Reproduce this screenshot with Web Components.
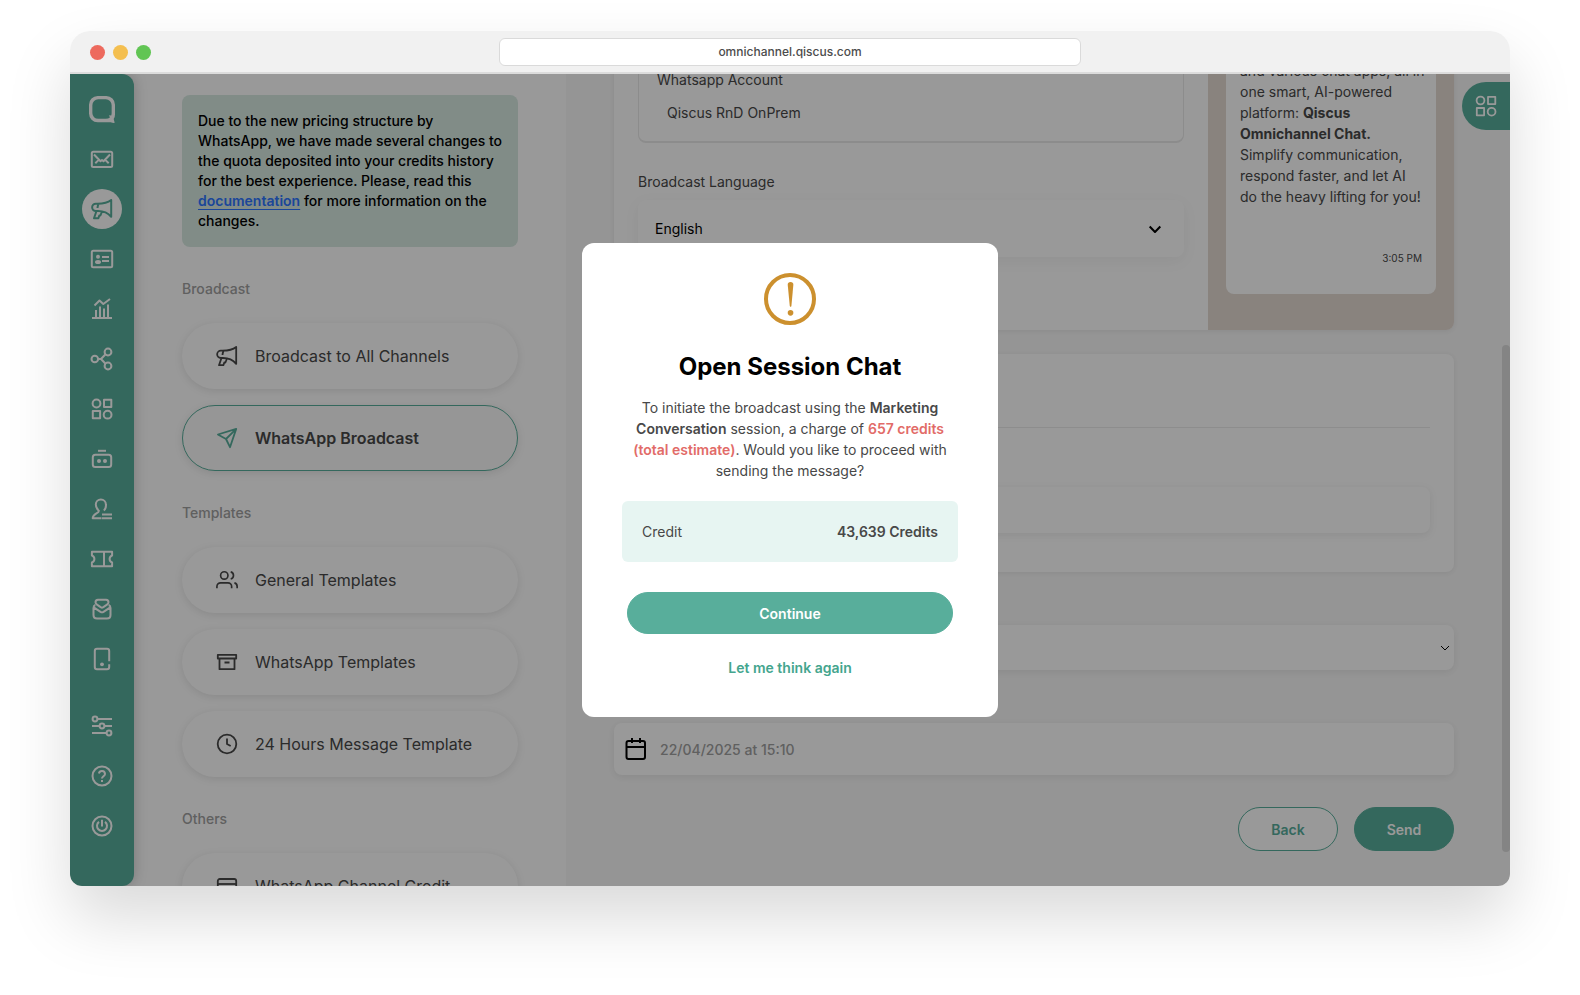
<!DOCTYPE html>
<html lang="en">
<head>
<meta charset="utf-8">
<title>Qiscus Omnichannel</title>
<style>
  :root {
    --brand: #58ae9b;
    --brand-dark: #44a58e;
    --text: #484848;
    --muted: #a0a0a0;
  }
  html, body { margin: 0; }
  body {
    box-sizing: border-box;
    min-height: 100vh;
    padding: 31px 70px 109px;
    background: #fff;
    color: var(--text);
    font: 400 14px/21px Inter, "Liberation Sans", sans-serif;
    overflow: hidden;
  }
</style>
</head>
<body>
<browser-window address="omnichannel.qiscus.com">
  <omni-app></omni-app>
</browser-window>

<script>
const ICONS = {
  logo: '<path fill="currentColor" stroke="none" fill-rule="evenodd" d="M8 0H16A8 8 0 0 1 24 8V17Q24 19.500 22.800 21.200L23.700 24.800Q22 25 20 24.200H8A8 8 0 0 1 0 16.200V8A8 8 0 0 1 8 0ZM8.500 3.100A5.400 5.400 0 0 0 3.100 8.500V15.700A5.400 5.400 0 0 0 8.500 21.100H15.500Q17.800 21.100 19.300 19.900L18.500 17.800L20.500 18.100Q20.900 17 20.900 15.700V8.500A5.400 5.400 0 0 0 15.500 3.100Z"/>',
  mail: '<rect x="1.800" y="4.700" width="20.400" height="15.300" rx="1.500"/><path d="M4 7.500 10.500 14.200 12 13 13.500 14.200 20 7.500M5.300 16.200 9 12.600M18.700 16.200 15 12.600"/>',
  megaphone: '<path d="M7.500 6.700H5.800a3.500 3.500 0 0 0 0 7.300H8c5.500 0 9.500 1.400 13.200 5.800V3C17.500 6 13 6.700 7.500 6.700ZM8.500 6.800C7.800 8.500 7.600 10 7.500 11M6.400 14.200 4 21.200H8.400L9.300 18.500H10.400L12 14.500"/>',
  contact: '<rect x="1.800" y="3.800" width="20.400" height="16.500" rx="1.500"/><circle cx="8" cy="9.800" r="2" fill="currentColor" stroke="none"/><ellipse cx="8" cy="15" rx="3" ry="2.100" fill="currentColor" stroke="none"/><path d="M12 10H19M12 14H19"/>',
  chart: '<path d="M2 21H22M6 20V13M10 20V9.500M14 20V11.500M18 20V7.500M4.500 8.500 9.500 3.500 13.300 7 20 2"/>',
  share: '<circle cx="4.800" cy="12" r="3.300"/><circle cx="18" cy="5" r="3.400"/><circle cx="18" cy="19" r="3.400"/><path d="M8.100 12H11M15.300 7.500 11 12 15.300 16.500"/>',
  apps: '<circle cx="6.500" cy="6.500" r="3.900"/><rect x="14" y="2.800" width="7.300" height="7.300"/><rect x="2.800" y="14" width="7.300" height="7.300"/><circle cx="17.600" cy="17.700" r="3.900"/>',
  bot: '<path d="M8 3.800H16"/><rect x="2.800" y="7.800" width="18.400" height="12.300" rx="2.500"/><circle cx="9" cy="14" r="2" fill="currentColor" stroke="none"/><circle cx="15" cy="14" r="2" fill="currentColor" stroke="none"/>',
  agent: '<path d="M13.800 13.500C15.500 12 16.200 9.800 15.900 7.500A5 5 0 0 0 5.800 7.500C5.800 10.500 7.200 12.300 8.800 13.800C9 16.600 2.700 16.400 2.700 21.300H11.500M12 17.600H22M12 21.300H22"/>',
  ticket: '<path d="M1.900 4.700H22.100V8.500A3.700 3.700 0 0 0 22.100 15.500V19.300H1.900V15.500A3.700 3.700 0 0 0 1.900 8.500ZM14 4.700V19.300"/>',
  inbox: '<path d="M8 2.800H16Q18.500 3 18.500 5.300Q18.500 6.700 17 7.700L13 10.300Q12 11 11 10.300L7 7.700Q5.500 6.700 5.500 5.300Q5.500 3 8 2.800ZM5.300 8Q3.500 8.600 3.500 11V18Q3.500 21.500 7 21.500H17Q20.500 21.500 20.500 18V11Q20.500 8.600 18.700 8M3.700 10.300 10.500 14.900Q12 15.800 13.500 14.900L20.300 10.300"/>',
  phone: '<path d="M19.200 14.300V4Q19.200 1.800 17 1.800H7Q4.800 1.800 4.800 4V20Q4.800 22.200 7 22.200H17Q19.200 22.200 19.200 20V17.300"/><circle cx="12" cy="17.300" r="1.900" fill="currentColor" stroke="none"/>',
  sliders: '<path d="M7.500 5H22M2 12H9.500M14.500 12H22M2 19H16.500"/><circle cx="5" cy="5" r="2.400"/><circle cx="12" cy="12" r="2.400"/><circle cx="19" cy="19" r="2.400"/>',
  help: '<circle cx="12" cy="12" r="9.500"/><path d="M8.900 9.400A3.100 3.100 0 0 1 15 9.900C15 12 12 12.500 12 14.500M12 16V18"/>',
  power: '<circle cx="12" cy="12" r="9.500"/><path d="M9 7.900A5 5 0 1 0 15 7.900M12 5.700V12.500" stroke-width="2"/>',
  send: '<path d="M21.200 2.900 2.900 8.500 11 13 15 21.200ZM21.200 2.900 11 13"/>',
  users: '<g transform="translate(1 1) scale(.920)"><path d="M17 21V19a4 4 0 0 0-4-4H5a4 4 0 0 0-4 4V21M23 21V19a4 4 0 0 0-3-3.870M16 3.130a4 4 0 0 1 0 7.750"/><circle cx="9" cy="7" r="4"/></g>',
  archive: '<path d="M2.800 4.800H21.200V8.500H2.800ZM4.500 8.500V19.200H19.500V8.500M9.500 12.500H14.500"/>',
  clock: '<circle cx="12" cy="12" r="9.300"/><path d="M12 6.500V12L15.700 14"/>',
  card: '<rect x="2.800" y="5" width="18.400" height="14.500" rx="2"/><path d="M2.800 10H21.200"/>',
  calendar: '<g stroke-width="2"><rect x="2.500" y="4" width="18.500" height="18" rx="2"/><path d="M2.500 10H21M8 1V6M16 1V6"/></g>',
  chevron: '<path d="M6.700 9.500 12 15 17.300 9.500" stroke-width="2"/>',
  'chevron-thin': '<path d="M8 10 12 14 16 10" stroke-width="1"/>',
  alert: '<circle cx="12" cy="12" r="11.080" stroke-width="1.850"/><path fill="currentColor" stroke="none" d="M10.950 5.400A1.300 1.300 0 0 1 13.550 5.400L12.650 15.200Q12.300 16 11.900 15.200Z"/><circle cx="12.250" cy="18.400" r="1.300" fill="currentColor" stroke="none"/>'
};

/* Every element renders its static template into an open shadow root. */
class Base extends HTMLElement {
  connectedCallback() {
    if (this.shadowRoot) return;
    const t = document.createElement('template');
    t.innerHTML = '<style>*{box-sizing:border-box}button,input,select{font:inherit;color:inherit;margin:0}</style>' + this.render();
    this.attachShadow({ mode: 'open' }).append(t.content.cloneNode(true));
  }
  attr(name) { return this.getAttribute(name) || ''; }
}
const define = (name, render) => customElements.define(name, class extends Base { render() { return render(this); } });

define('ui-icon', el => `
  <style>
    :host { display: block; flex: none; width: var(--size, 24px); height: var(--size, 24px); }
    svg { display: block; width: 100%; height: 100%; overflow: visible; stroke-width: var(--stroke, 1.800); }
  </style>
  <svg viewBox="0 0 24 24" fill="none" stroke="currentColor" stroke-linejoin="round" aria-hidden="true">${ICONS[el.attr('name')]}</svg>`);

define('browser-window', el => `
  <style>
    :host { display: flex; flex-direction: column; height: calc(100vh - 140px); min-height: 640px;
      border-radius: 20px 20px 12px 12px; overflow: hidden; box-shadow: 0 32px 64px rgba(0,0,0,.150); }
    header { display: grid; grid-template-columns: 1fr minmax(0, 582px) 1fr; align-items: center; flex: none;
      height: 43px; padding: 1px 20px 0; background: #f1f1f1; border-bottom: 2px solid #dcdcdc; }
    .dots { display: flex; gap: 8px; }
    .dots i { width: 15px; height: 15px; border-radius: 50%; background: var(--c); }
    .url { height: 28px; border: 1px solid #dadada; border-radius: 6px; background: #fff; color: #4c4c4c;
      font-size: 12px; font-weight: 500; line-height: 26px; text-align: center; }
    main { flex: 1; min-height: 0; }
  </style>
  <header>
    <div class="dots"><i style="--c:#ed6a5e"></i><i style="--c:#f4bf50"></i><i style="--c:#61c554"></i></div>
    <div class="url">${el.attr('address')}</div>
  </header>
  <main><slot></slot></main>`);

define('omni-app', () => `
  <style>
    :host { position: relative; display: flex; height: 100%; background: #fff; overflow: hidden; }
    broadcast-form { flex: 1; min-width: 0; }
    .fab { position: absolute; top: 8px; right: 0; width: 48px; height: 48px; padding: 0 12px; border: 0;
      border-radius: 24px 0 0 24px; background: var(--brand); color: #fff; }
    .backdrop { position: absolute; inset: 0; z-index: 5; display: grid; place-items: center; background: rgba(0,0,0,.400); }
  </style>
  <side-rail></side-rail>
  <nav-panel></nav-panel>
  <broadcast-form></broadcast-form>
  <button class="fab" aria-label="Apps"><ui-icon name="apps"></ui-icon></button>
  <div class="backdrop"><confirm-dialog></confirm-dialog></div>`);

define('side-rail', () => `
  <style>
    :host { display: block; flex: none; width: 64px; z-index: 1; border-radius: 0 12px 12px 12px; background: var(--brand);
      color: #fff; box-shadow: 0 0 14px rgba(0,0,0,.220); }
    nav { display: flex; flex-direction: column; align-items: center; gap: 10px; padding-top: 15px; }
    .logo { display: grid; place-items: center; width: 40px; height: 40px; --size: 26px; }
    hr { width: 100%; height: 7px; margin: 0; border: 0; }
  </style>
  <nav aria-label="Main">
    <div class="logo"><ui-icon name="logo"></ui-icon></div>
    <rail-item icon="mail"></rail-item>
    <rail-item icon="megaphone" active></rail-item>
    ${['contact','chart','share','apps','bot','agent','ticket','inbox','phone'].map(i => `<rail-item icon="${i}"></rail-item>`).join('')}
    <hr>
    ${['sliders','help','power'].map(i => `<rail-item icon="${i}"></rail-item>`).join('')}
  </nav>`);

define('rail-item', el => `
  <style>
    :host { display: block; --stroke: 2; }
    button { display: grid; place-items: center; width: 40px; height: 40px; padding: 0; border: 0; border-radius: 50%; background: none; color: #fff; }
    :host([active]) button { background: #fff; color: var(--brand); }
  </style>
  <button aria-label="${el.attr('icon')}"><ui-icon name="${el.attr('icon')}"></ui-icon></button>`);

define('nav-panel', () => `
  <style>
    :host { display: block; flex: none; width: 432px; padding: 21px 48px 0; overflow: hidden; }
    a { color: #2d75ff; font-weight: 600; text-decoration: underline; text-underline-offset: 3px; }
  </style>
  <notice-card>Due to the new pricing structure by WhatsApp, we have made several changes to the quota deposited into your credits history for the best experience. Please, read this <a href="#documentation">documentation</a> for more information on the changes.</notice-card>
  <nav-group heading="Broadcast">
    <nav-pill icon="megaphone">Broadcast to All Channels</nav-pill>
    <nav-pill icon="send" active>WhatsApp Broadcast</nav-pill>
  </nav-group>
  <nav-group heading="Templates">
    <nav-pill icon="users">General Templates</nav-pill>
    <nav-pill icon="archive">WhatsApp Templates</nav-pill>
    <nav-pill icon="clock">24 Hours Message Template</nav-pill>
  </nav-group>
  <nav-group heading="Others">
    <nav-pill icon="card">WhatsApp Channel Credit</nav-pill>
  </nav-group>`);

define('notice-card', () => `
  <style>
    :host { display: block; padding: 16px 8px 16px 16px; border-radius: 8px; background: #d7e9e2; color: #000; font-weight: 500; line-height: 20px; }
  </style>
  <slot></slot>`);

define('nav-group', el => `
  <style>
    :host { display: block; margin-top: 32px; }
    h3 { margin: 0 0 24px; color: var(--muted); font-size: 14px; font-weight: 500; line-height: 20px; }
    div { display: flex; flex-direction: column; gap: 16px; }
  </style>
  <h3>${el.attr('heading')}</h3><div><slot></slot></div>`);

define('nav-pill', el => `
  <style>
    :host { display: block; font-size: 16px; line-height: 24px; }
    button { display: flex; align-items: center; gap: 16px; width: 100%; height: 66px; padding: 0 32px; border: 1px solid transparent;
      border-radius: 33px; background: #fff; background-clip: border-box; text-align: left; box-shadow: 0 2px 8px rgba(0,0,0,.100); }
    :host([active]) button { border-color: var(--brand); background: #fafafa; font-weight: 600; }
    :host([active]) ui-icon { color: var(--brand); }
  </style>
  <button><ui-icon name="${el.attr('icon')}"></ui-icon><span><slot></slot></span></button>`);

define('broadcast-form', () => `
  <style>
    :host { display: flex; background: #f9f9f9; }
    .scroll { display: flex; flex: 1; flex-direction: column; justify-content: flex-end; min-width: 0; padding: 0 48px 35px; overflow: hidden; }
    .scroll > * { flex: none; }
    .track { display: flex; flex-direction: column; flex: none; width: 8px; }
    .track::before { content: ""; flex: 271; }
    .track i { flex: 507; border-radius: 4px; background: #dcdcdc; }
    .track::after { content: ""; flex: 34; }
    .field { display: grid; align-items: center; border-radius: 8px; background: #fff; box-shadow: 0 2px 8px rgba(0,0,0,.080); }
    .field > * { grid-area: 1 / 1; }
    .field > ui-icon { justify-self: end; pointer-events: none; }
    select, input { appearance: none; width: 100%; padding: 0; border: 0; outline: 0; background: none; }
    .card { display: grid; align-content: start; margin-top: 24px; height: 218px; padding: 73px 24px 0; border-radius: 8px; background: #fff; box-shadow: 0 1px 6px rgba(0,0,0,.080); }
    .card .field { height: 46px; margin-top: 59px; }
    .card hr { width: 100%; height: 1px; margin: 0; border: 0; background: #ebebeb; }
    .plan { height: 45px; margin-top: 53px; color: #000; }
    .plan ui-icon { margin-right: -3px; }
    .date { grid-template-columns: 24px 1fr; gap: 12px; height: 52px; margin-top: 53px; padding: 0 10px; color: var(--muted); font-weight: 500; }
    .date > * { grid-area: auto; }
    .date > ui-icon { justify-self: start; color: #000; }
    .actions { display: flex; justify-content: flex-end; gap: 16px; margin-top: 32px; }
  </style>
  <div class="scroll">
    <template-card></template-card>
    <section class="card">
      <hr>
      <div class="field"><input type="text" aria-label="Recipient"></div>
    </section>
    <div class="field plan"><select aria-label="Schedule"><option></option></select><ui-icon name="chevron-thin"></ui-icon></div>
    <div class="field date"><ui-icon name="calendar"></ui-icon><input type="text" aria-label="Send date" value="22/04/2025 at 15:10"></div>
    <div class="actions"><round-button kind="outline">Back</round-button><round-button>Send</round-button></div>
  </div>
  <div class="track"><i></i></div>`);

define('template-card', () => `
  <style>
    :host { display: grid; grid-template-columns: minmax(0, 1fr) 246px; border-radius: 8px; background: #fff; box-shadow: 0 1px 6px rgba(0,0,0,.080); overflow: hidden; }
    .form { display: flex; flex-direction: column; justify-content: flex-end; padding: 0 24px 73px; }
    .account { padding: 18px; border: 1px solid #e9e9e9; border-bottom-width: 2px; border-radius: 8px; }
    .account h4 { margin: 0; font: inherit; }
    .account p { margin: 12px 0 0; padding-left: 10px; }
    label { margin-top: 28px; }
    .field { display: grid; align-items: center; height: 57px; margin-top: 8px; border-radius: 8px; background: #fff; color: #000; box-shadow: 0 4px 16px rgba(0,0,0,.050); }
    .field > * { grid-area: 1 / 1; }
    ui-icon { justify-self: end; margin-right: 17px; pointer-events: none; }
    select { appearance: none; width: 100%; height: 100%; padding: 0 17px; border: 0; background: none; }
    .chat { display: flex; flex-direction: column; justify-content: flex-end; padding: 18px 18px 36px; background: #e4dad3; }
    .bubble { padding: 14px 14px 28px; border-radius: 8px; background: #fff; }
    .bubble p { margin: 0 -4px 0 0; }
    time { display: block; margin-top: 43px; font-size: 10px; line-height: 16px; text-align: right; }
  </style>
  <div class="form">
    <div class="account"><h4>Whatsapp Account</h4><p>Qiscus RnD OnPrem</p></div>
    <label for="lang">Broadcast Language</label>
    <div class="field"><select id="lang"><option>English</option></select><ui-icon name="chevron"></ui-icon></div>
  </div>
  <div class="chat">
    <div class="bubble">
      <p>and various chat apps, all in one smart, AI-powered platform: <b>Qiscus Omnichannel Chat.</b> Simplify communication, respond faster, and let AI do the heavy lifting for you!</p>
      <time>3:05 PM</time>
    </div>
  </div>`);

define('round-button', () => `
  <style>
    :host { display: block; }
    button { width: 100%; min-width: 100px; height: var(--height, 44px); padding: 0 16px; border: 1px solid var(--brand); border-radius: 22px;
      background: var(--brand); color: #fff; font-weight: 600; }
    :host([kind=outline]) button { background: #fff; color: var(--brand); }
    :host([kind=text]) button { border-color: transparent; background: none; color: var(--brand-dark); }
  </style>
  <button><slot></slot></button>`);

define('confirm-dialog', () => `
  <style>
    :host { display: block; width: 416px; border-radius: 12px; background: #fff; }
    section { display: flex; flex-direction: column; padding: 30px 40px; text-align: center; }
    ui-icon { --size: 52px; align-self: center; color: #cc902e; }
    h2 { margin: 24px 0 12px; color: #000; font-size: 24px; font-weight: 700; line-height: 36px; }
    p { margin: 0; }
    b { font-weight: 600; }
    .cost { color: #e26b68; }
    dl { display: flex; justify-content: space-between; margin: 20px 0 30px; padding: 20px; border-radius: 6px; background: #e7f5f2; }
    dd { margin: 0; font-weight: 600; }
    round-button { --height: 42px; margin: 0 5px; }
    round-button + round-button { --height: 40px; margin-top: 13px; }
  </style>
  <section role="dialog" aria-labelledby="title">
    <ui-icon name="alert"></ui-icon>
    <h2 id="title">Open Session Chat</h2>
    <p>To initiate the broadcast using the <b>Marketing Conversation</b> session, a charge of <b class="cost">657 credits (total estimate)</b>. Would you like to proceed with sending the message?</p>
    <dl><dt>Credit</dt><dd>43,639 Credits</dd></dl>
    <round-button>Continue</round-button>
    <round-button kind="text">Let me think again</round-button>
  </section>`);
</script>
</body>
</html>
